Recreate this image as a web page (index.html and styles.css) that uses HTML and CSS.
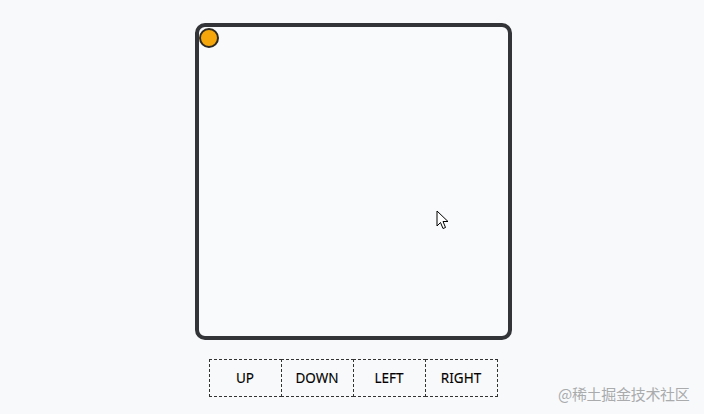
FILE: index.html
```html
<!DOCTYPE html>
<html>
<head>
<meta charset="utf-8">
<link rel="stylesheet" href="styles.css">
</head>
<body>
<div class="page">
  <div class="board">
    <div class="ball"></div>
  </div>
  <div class="controls">
    <button class="btn">UP</button>
    <button class="btn">DOWN</button>
    <button class="btn">LEFT</button>
    <button class="btn">RIGHT</button>
  </div>
</div>
<svg class="cursor" width="14" height="22" viewBox="0 0 14 22"><path d="M1 1 L1 16 L4.5 12.5 L7 18.5 L9.5 17.5 L7 11.5 L12 11.5 Z" fill="#fff" stroke="#000" stroke-width="1" stroke-linejoin="miter"/></svg>
<div class="watermark">@稀土掘金技术社区</div>
</body>
</html>
```
FILE: styles.css
```css
html, body {
  margin: 0;
  padding: 0;
  background: #f8f9fb;
  width: 704px;
  height: 414px;
  overflow: hidden;
  font-family: "Noto Sans", "Liberation Sans", sans-serif;
}
.page {
  display: flex;
  flex-direction: column;
  align-items: center;
  padding-top: 23px;
  padding-left: 2px;
}
.board {
  position: relative;
  box-sizing: border-box;
  width: 317px;
  height: 317px;
  border: 4px solid #333437;
  border-radius: 10px;
  background: #f9fafc;
}
.ball {
  position: absolute;
  left: 0;
  top: 1px;
  width: 20px;
  height: 20px;
  box-sizing: border-box;
  border-radius: 50%;
  background: #f4a60b;
  border: 2px solid #2e2a22;
}
.controls {
  display: flex;
  margin-top: 19px;
}
.btn {
  box-sizing: border-box;
  width: 73px;
  height: 38px;
  margin: 0;
  padding: 0 0 1px;
  background: transparent;
  border: 1px dashed #333;
  font-family: "Noto Sans", "Liberation Sans", sans-serif;
  font-size: 13.5px;
  font-weight: 400;
  color: #000;
  -webkit-text-stroke: 0.12px #000;
}
.btn + .btn {
  margin-left: -1px;
}
.cursor {
  position: absolute;
  left: 436px;
  top: 210px;
}
.watermark {
  position: absolute;
  left: 558px;
  top: 383px;
  font-family: "Noto Sans CJK SC", sans-serif;
  font-size: 15px;
  color: #a9abad;
  letter-spacing: -0.3px;
}
```
